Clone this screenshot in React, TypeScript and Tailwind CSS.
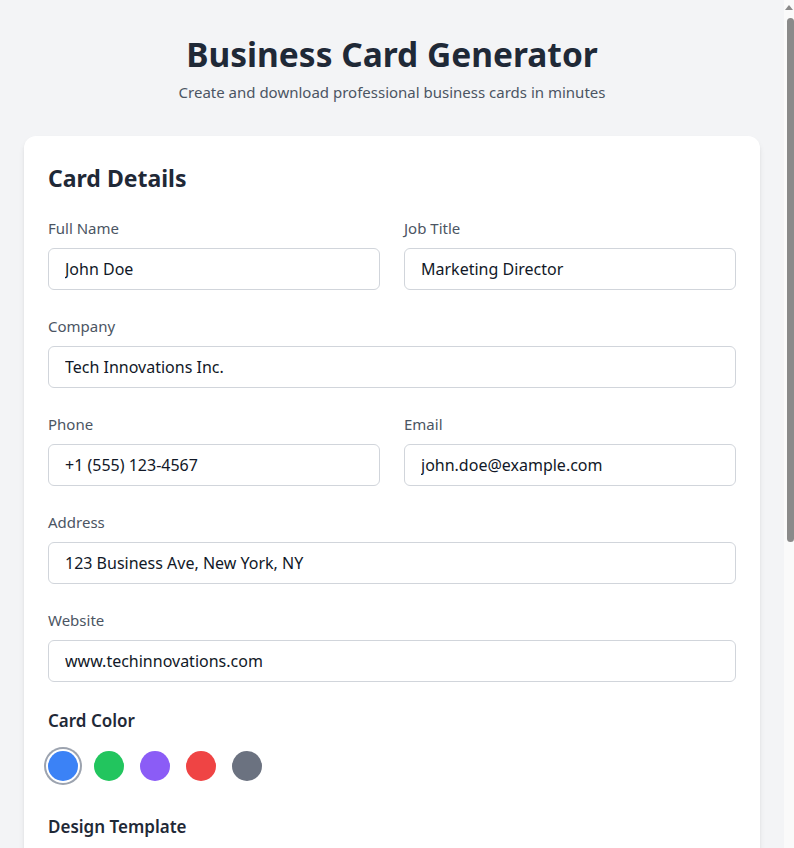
import { useState } from 'react';

const COLORS = [
  { name: 'blue', cls: 'bg-[#3b82f6]' },
  { name: 'green', cls: 'bg-[#22c55e]' },
  { name: 'purple', cls: 'bg-[#8b5cf6]' },
  { name: 'red', cls: 'bg-[#ef4444]' },
  { name: 'gray', cls: 'bg-[#6b7280]' },
];

function Field({ label, value }: { label: string; value: string }) {
  return (
    <div>
      <label className="block text-[15px] leading-6 text-[#4b5563] mb-2">{label}</label>
      <input
        defaultValue={value}
        className="w-full px-4 py-2 text-base leading-6 text-[#111827] border border-[#d1d5db] rounded-md outline-none focus:border-[#3b82f6]"
      />
    </div>
  );
}

export default function App() {
  const [color, setColor] = useState('blue');
  const [template, setTemplate] = useState('modern');

  return (
    <div className="min-h-screen bg-[#f3f4f6] font-['Noto_Sans',sans-serif]">
      <div className="mr-[10px] px-6 pt-[34px] pb-10">
        {/* ── Header ── */}
        <div className="text-center mb-8">
          <h1 className="text-[33.5px] leading-10 font-bold text-[#1f2937] mb-1.5">Business Card Generator</h1>
          <p className="text-[15px] leading-6 text-[#4b5563]">Create and download professional business cards in minutes</p>
        </div>

        {/* ── Form card ── */}
        <div className="bg-white rounded-xl shadow-md p-6">
          <h2 className="text-[23px] leading-8 font-bold text-[#1f2937] pt-0.5 mb-[22px]">Card Details</h2>

          <div className="flex flex-col gap-6">
            <div className="grid grid-cols-2 gap-6">
              <Field label="Full Name" value="John Doe" />
              <Field label="Job Title" value="Marketing Director" />
            </div>
            <Field label="Company" value="Tech Innovations Inc." />
            <div className="grid grid-cols-2 gap-6">
              <Field label="Phone" value="+1 (555) 123-4567" />
              <Field label="Email" value="john.doe@example.com" />
            </div>
            <Field label="Address" value="123 Business Ave, New York, NY" />
            <Field label="Website" value="www.techinnovations.com" />

            <div>
              <h3 className="text-[17px] leading-7 font-semibold text-[#1f2937] mt-px mb-4">Card Color</h3>
              <div className="flex gap-4 items-center">
                {COLORS.map((c) => (
                  <button
                    key={c.name}
                    onClick={() => setColor(c.name)}
                    className={`w-[30px] h-[30px] rounded-full ${c.cls} ${
                      color === c.name ? 'ring-2 ring-[#9ca3af] ring-offset-2' : ''
                    }`}
                  />
                ))}
              </div>
            </div>

            <div className="mt-2">
              <h3 className="text-[17px] leading-7 font-semibold text-[#1f2937] mb-4">Design Template</h3>
              <div className="grid grid-cols-3 gap-4">
                {['modern', 'classic', 'minimal'].map((t) => (
                  <button
                    key={t}
                    onClick={() => setTemplate(t)}
                    className={`py-3 rounded-md border text-sm capitalize ${
                      template === t ? 'border-[#3b82f6] bg-[#eff6ff] text-[#1d4ed8]' : 'border-[#d1d5db] text-[#374151]'
                    }`}
                  >
                    {t}
                  </button>
                ))}
              </div>
            </div>
          </div>
        </div>

        {/* ── Preview ── */}
        <div className="bg-white rounded-xl shadow-md p-6 mt-8">
          <h2 className="text-[23px] leading-8 font-bold text-[#1f2937] mb-6">Preview</h2>
          <div className="bg-[#3b82f6] text-white rounded-lg p-6 h-52 flex flex-col justify-between">
            <div>
              <div className="text-xl font-bold">John Doe</div>
              <div className="text-sm">Marketing Director</div>
            </div>
            <div className="text-sm">Tech Innovations Inc.</div>
          </div>
          <button className="mt-6 w-full bg-[#2563eb] text-white font-semibold py-3 rounded-md">Download Card</button>
        </div>
      </div>

      {/* ── Browser scrollbar as seen in the screenshot ── */}
      <div className="fixed top-0 right-0 h-screen w-[10px] bg-[#fafafa]">
        <div className="mx-auto mt-[5px] w-0 h-0 border-x-[4px] border-x-transparent border-b-[5px] border-b-[#8a8a8a]" />
        <div className="absolute top-[18px] left-[3px] right-0 h-[524px] rounded-sm bg-[#8a8a8a]" />
      </div>
    </div>
  );
}
